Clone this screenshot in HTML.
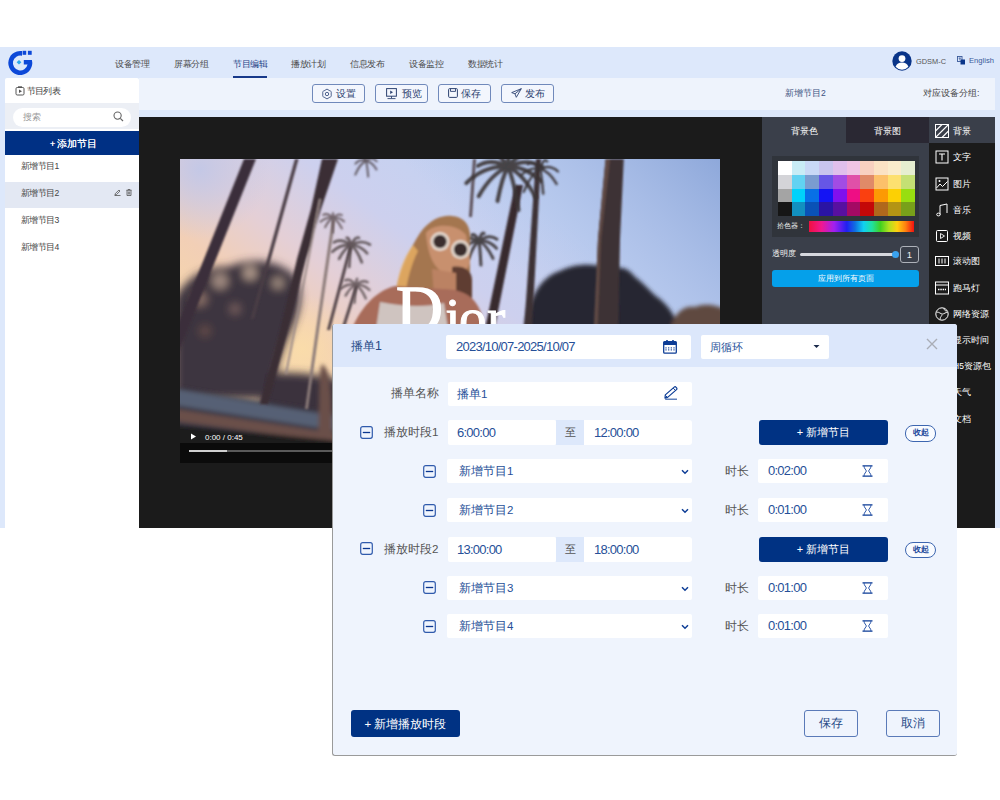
<!DOCTYPE html>
<html><head><meta charset="utf-8">
<style>
*{margin:0;padding:0;box-sizing:border-box}
html,body{width:1000px;height:800px;overflow:hidden;background:#fff;font-family:"Liberation Sans",sans-serif}
.a{position:absolute}
.app{position:absolute;left:0;top:47px;width:1000px;height:481px;background:#dde8fb}
.nav{position:absolute;top:11px;font-size:8.6px;letter-spacing:-0.5px;color:#4a4a4a;white-space:nowrap;line-height:12px}
.nav.on{color:#1e3f86}
.ul{position:absolute;top:29px;height:2px;background:#16388a}
.side{position:absolute;left:5px;top:31px;width:134px;height:450px;background:#fff;border-radius:2px 2px 0 0}
.tb{position:absolute;left:139px;top:31px;width:856px;height:32px;background:#eef3fc}
.btn{position:absolute;top:6px;width:53px;height:19px;border:1px solid #7089bb;border-radius:3px;background:#f3f6fd;font-size:10px;color:#2d4270;line-height:18px;text-align:center;white-space:nowrap}
.stage{position:absolute;left:139px;top:70px;width:623px;height:411px;background:#1b1b1b}
.rp{position:absolute;left:762px;top:70px;width:233px;height:411px;background:#1b1b1b}
.modal{position:absolute;left:332px;top:324px;width:625px;height:432px;background:#eff4fd;border-radius:3px;border-left:1px solid #9a9a9a;border-bottom:1px solid #9a9a9a}
.mh{position:absolute;left:0;top:0;width:624px;height:43px;background:#dce7fb;border-radius:3px 3px 0 0}
.inp{position:absolute;background:#fff;border-radius:2px;height:25px;font-size:11.5px;color:#264f98;line-height:25px;white-space:nowrap}
.num{font-size:13px !important;letter-spacing:-0.75px}
.lbl{position:absolute;font-size:11.6px;color:#555;line-height:14px;white-space:nowrap}
.pbtn{position:absolute;background:#003283;color:#fff;border-radius:3px;font-size:11px;text-align:center;white-space:nowrap}
</style></head><body>
<div class="app">
  <!-- header -->
  <svg class="a" style="left:0;top:0" width="40" height="32" viewBox="0 47 40 32">
    <path d="M22 51.1 A12 12 0 1 0 31.9 60 L23.8 60 L23.8 64.5 L27.55 64.5 A7.4 7.4 0 1 1 22 55.8 Z" fill="#0c48d8"/>
    <rect x="22.6" y="50.8" width="3.6" height="4" fill="#0c48d8"/><rect x="27.9" y="50.8" width="3.8" height="4" fill="#0c48d8"/>
    <path d="M19 60l2.4 2.3-2.4 2.3-2.4-2.3z" fill="#2aa8ea"/>
  </svg>
  <div class="nav" style="left:115px">设备管理</div>
  <div class="nav" style="left:174px">屏幕分组</div>
  <div class="nav on" style="left:233px">节目编辑</div>
  <div class="ul" style="left:233px;width:34px"></div>
  <div class="nav" style="left:291px">播放计划</div>
  <div class="nav" style="left:350px">信息发布</div>
  <div class="nav" style="left:409px">设备监控</div>
  <div class="nav" style="left:468px">数据统计</div>

  <svg class="a" style="left:892px;top:4px" width="20" height="20" viewBox="0 0 20 20"><circle cx="10" cy="10" r="9.7" fill="#0a3589"/><circle cx="10" cy="7.6" r="3.4" fill="#fff"/><path d="M3.6 15.8C4.6 12.6 7 11.6 10 11.6s5.4 1 6.4 4.2A8.5 8.5 0 0 1 3.6 15.8z" fill="#fff"/></svg>
  <div class="a" style="left:916px;top:10px;font-size:7.4px;color:#555;line-height:10px">GDSM-C</div>
  <svg class="a" style="left:957px;top:9px" width="8" height="9" viewBox="0 0 8 9"><rect x="0.5" y="0.5" width="4.5" height="5" fill="none" stroke="#3a5a9a" stroke-width="0.9"/><rect x="3.5" y="3.5" width="4.5" height="5" fill="#0a3589"/><path d="M1.6 2.2h2.4M2.8 1.5v3" stroke="#3a5a9a" stroke-width="0.7"/></svg>
  <div class="a" style="left:969px;top:9px;font-size:7.6px;color:#3a5a9a;line-height:10px">English</div>
  <div class="side">
    <svg class="a" style="left:10px;top:8px" width="10" height="10" viewBox="0 0 10 10"><rect x="1" y="1.5" width="8" height="7.5" rx="1.2" fill="none" stroke="#555" stroke-width="1"/><path d="M3 0.8h4" stroke="#555" stroke-width="1"/><path d="M4 3.5v3.5l3-1.75z" fill="#555"/></svg>
    <div class="a" style="left:22px;top:7px;font-size:8.6px;letter-spacing:-0.8px;color:#444;line-height:12px">节目列表</div>
    <div class="a" style="left:0;top:25px;width:134px;height:26px;background:#eceff5"></div>
    <div class="a" style="left:8px;top:30px;width:118px;height:19px;background:#fff;border-radius:10px"></div>
    <div class="a" style="left:18px;top:33px;font-size:8.7px;color:#999;line-height:12px">搜索</div>
    <svg class="a" style="left:108px;top:33px" width="11" height="11" viewBox="0 0 11 11"><circle cx="4.6" cy="4.6" r="3.6" fill="none" stroke="#666" stroke-width="1.1"/><path d="M7.3 7.3L10 10" stroke="#666" stroke-width="1.2"/></svg>
    <div class="a" style="left:0;top:53px;width:134px;height:23.5px;background:#003084;color:#fff;font-size:9.6px;letter-spacing:-0.3px;line-height:25px;text-align:center;padding-left:2px;text-shadow:0 0 0.4px #fff">+ 添加节目</div>
    <div class="a" style="left:16px;top:82px;font-size:8.6px;letter-spacing:-0.6px;color:#444;line-height:12px">新增节目1</div>
    <div class="a" style="left:0;top:104px;width:134px;height:26px;background:#e3e8f3"></div>
    <div class="a" style="left:16px;top:109px;font-size:8.6px;letter-spacing:-0.6px;color:#444;line-height:12px">新增节目2</div>
    <svg class="a" style="left:109px;top:111px" width="7" height="7" viewBox="0 0 7 7"><path d="M1 6L1.3 4.6 5 1 6 2 2.4 5.7z M0.5 6.5h6" fill="none" stroke="#555" stroke-width="0.8"/></svg>
    <svg class="a" style="left:121px;top:111px" width="6" height="7" viewBox="0 0 6 7"><path d="M0.3 1.3h5.4M2 1.2V0.5h2v0.7M1 1.5v5h4v-5M2.3 2.5v3M3.7 2.5v3" fill="none" stroke="#555" stroke-width="0.8"/></svg>
    <div class="a" style="left:16px;top:136px;font-size:8.6px;letter-spacing:-0.6px;color:#444;line-height:12px">新增节目3</div>
    <div class="a" style="left:16px;top:163px;font-size:8.6px;letter-spacing:-0.6px;color:#444;line-height:12px">新增节目4</div>
  </div>
  <div class="tb">
    <div class="btn" style="left:173px"><svg class="a" style="left:8px;top:3px" width="12" height="12" viewBox="0 0 12 12"><path d="M5.00 1.62 Q6.00 0.70 7.00 1.62 Q8.00 2.54 9.29 2.94 Q10.59 3.35 10.29 4.67 Q10.00 6.00 10.29 7.32 Q10.59 8.65 9.29 9.06 Q8.00 9.46 7.00 10.38 Q6.00 11.30 5.00 10.38 Q4.00 9.46 2.71 9.06 Q1.41 8.65 1.71 7.33 Q2.00 6.00 1.71 4.68 Q1.41 3.35 2.71 2.94 Q4.00 2.54 5.00 1.62Z" fill="none" stroke="#3d5282" stroke-width="0.9"/><circle cx="6" cy="6" r="1.7" fill="none" stroke="#3d5282" stroke-width="0.9"/></svg><span class="a" style="left:23px;top:0">设置</span></div>
    <div class="btn" style="left:236px"><svg class="a" style="left:10px;top:3px" width="11" height="12" viewBox="0 0 11 12"><rect x="0.6" y="0.6" width="9.8" height="7.6" fill="none" stroke="#2d4270" stroke-width="1"/><path d="M4.2 2.6v3.5l2.8-1.75z" fill="#2d4270"/><path d="M5.5 8.2v2M1.5 10.6h8" stroke="#2d4270" stroke-width="0.9"/></svg><span class="a" style="left:26px;top:0">预览</span></div>
    <div class="btn" style="left:299px"><svg class="a" style="left:9px;top:3px" width="10" height="10" viewBox="0 0 10 10"><rect x="0.6" y="0.6" width="8.8" height="8.8" rx="1" fill="none" stroke="#2d4270" stroke-width="1"/><path d="M2.5 0.8v2.6h5V0.8" fill="none" stroke="#2d4270" stroke-width="0.9"/></svg><span class="a" style="left:22px;top:0">保存</span></div>
    <div class="btn" style="left:362px"><svg class="a" style="left:9px;top:3px" width="11" height="10" viewBox="0 0 11 10"><path d="M10.3 0.7L0.7 4.6 4 5.8 5.3 9.3zM10.3 0.7L4 5.8" fill="none" stroke="#2d4270" stroke-width="0.9" stroke-linejoin="round"/></svg><span class="a" style="left:23px;top:0">发布</span></div>
    <div class="a" style="left:646px;top:9px;font-size:8.6px;color:#3c5282;line-height:12px">新增节目2</div>
    <div class="a" style="left:784px;top:9px;font-size:8.6px;color:#444;line-height:12px">对应设备分组:</div>
  </div>
  <div class="stage">
    <svg class="a" style="left:41px;top:42px" width="540" height="304" viewBox="0 0 540 304">
      <defs>
        <linearGradient id="sky" gradientUnits="userSpaceOnUse" x1="300" y1="0" x2="120" y2="240">
          <stop offset="0" stop-color="#c2d2f2"/>
          <stop offset="0.35" stop-color="#cdd0ee"/>
          <stop offset="0.6" stop-color="#e4cfd6"/>
          <stop offset="0.8" stop-color="#f2cfb6"/>
          <stop offset="1" stop-color="#f6d6aa"/>
        </linearGradient>
        <linearGradient id="skyR" gradientUnits="userSpaceOnUse" x1="540" y1="0" x2="380" y2="160">
          <stop offset="0" stop-color="#8ea8da"/>
          <stop offset="1" stop-color="#a8bce8" stop-opacity="0"/>
        </linearGradient>
        <radialGradient id="tl" gradientUnits="userSpaceOnUse" cx="20" cy="10" r="70">
          <stop offset="0" stop-color="#c4c8e6" stop-opacity="1"/>
          <stop offset="1" stop-color="#c4c8e6" stop-opacity="0"/>
        </radialGradient>
        <radialGradient id="glow" gradientUnits="userSpaceOnUse" cx="122" cy="190" r="55">
          <stop offset="0" stop-color="#fadcaa" stop-opacity="1"/>
          <stop offset="1" stop-color="#fadcaa" stop-opacity="0"/>
        </radialGradient>
        <filter id="b2" x="-20%" y="-20%" width="140%" height="140%"><feGaussianBlur stdDeviation="2"/></filter>
        <filter id="b4" x="-30%" y="-30%" width="160%" height="160%"><feGaussianBlur stdDeviation="4"/></filter>
        <filter id="b1" x="-10%" y="-10%" width="120%" height="120%"><feGaussianBlur stdDeviation="0.9"/></filter>
      </defs>
      <rect width="540" height="304" fill="url(#sky)"/>
      <rect width="540" height="304" fill="url(#skyR)"/>
      <rect width="200" height="120" fill="url(#tl)"/>
      <ellipse cx="122" cy="190" rx="60" ry="60" fill="url(#glow)"/>
      <!-- lower-left foliage -->
      <g filter="url(#b4)">
        <path d="M-5 140 C5 120 25 106 48 108 C68 98 98 100 114 116 C124 130 122 150 112 170 C102 190 95 215 90 240 L-5 240Z" fill="#3e3440"/>
        <path d="M85 215 C110 212 140 215 160 222 L160 260 L80 260Z" fill="#3a303c"/>
        <circle cx="20" cy="140" r="7" fill="#8a7068"/>
        <circle cx="40" cy="122" r="8" fill="#a08a80"/>
        <circle cx="70" cy="114" r="7" fill="#b09a8c"/>
        <circle cx="98" cy="124" r="6" fill="#a08c80"/>
        <circle cx="55" cy="150" r="5" fill="#7a6260"/>
        <circle cx="25" cy="172" r="5" fill="#6a5048"/>
      </g>
      <!-- road -->
      <g filter="url(#b2)">
        <path d="M-5 228 L160 255 L160 290 L-5 290Z" fill="#3a3844"/>
        <path d="M-5 230 L160 258 L160 272 L-5 246Z" fill="#566074"/>
        <path d="M-5 250 L160 275 L160 284 L-5 262Z" fill="#6a5048"/>
        <path d="M-5 266 L160 282 L160 290 L-5 290Z" fill="#1e1a1c"/>
        <path d="M142 205 C150 210 152 230 152 280 L138 280 C140 240 138 215 142 205Z" fill="#6a5048"/>
      </g>
      <!-- trunks left -->
      <g filter="url(#b1)">
        <path d="M64 0 L76 0 L-10 215 L-22 215Z" fill="#3b2f3a"/>
        <path d="M115 0 L118.5 0 L74 160 L70.5 160Z" fill="#4a3c44"/>
        <path d="M142 0 L158 0 L141 50 L126 100 L108 171 L88 245 L80 245 L100 171 L117 100 L131 50Z" fill="#3a2d35"/>
        <path d="M139 40 L141 40 L107 215 L105 215Z" fill="#9a8a88"/>
        <path d="M152 61 L155 61 L139 171 L136 171Z" fill="#8a7a78"/>
        <path d="M169 88 L172 88 L150 171 L147 171Z" fill="#4e4044"/>
        <path d="M175 127 L178 127 L164 171 L161 171Z" fill="#4e4044"/>
        <path d="M136 171 L139 171 L128 250 L125 250Z" fill="#8a7a78"/>
      </g>
      <g filter="url(#b1)"><g fill="none" stroke="#5a4c4e" stroke-width="2" stroke-linecap="round" opacity="0.8"><path d="M153.0 59.0Q159.2 57.9 164.2 62.4"/><path d="M153.0 59.0Q157.9 61.4 161.9 69.5"/><path d="M153.0 59.0Q153.0 63.4 153.0 73.7"/><path d="M153.0 59.0Q148.6 61.1 145.1 68.3"/><path d="M153.0 59.0Q146.1 57.7 140.4 62.8"/><path d="M153.0 59.0Q147.6 53.5 143.1 55.8"/><path d="M153.0 59.0Q153.0 53.3 153.0 54.0"/><path d="M153.0 59.0Q157.9 54.1 161.9 56.1"/></g><g fill="none" stroke="#4e4244" stroke-width="2.6" stroke-linecap="round" opacity="0.85"><path d="M171.0 86.0Q179.9 86.1 187.2 94.3"/><path d="M171.0 86.0Q177.0 90.5 181.8 103.3"/><path d="M171.0 86.0Q170.0 92.5 169.2 108.0"/><path d="M171.0 86.0Q164.5 89.2 159.1 99.9"/><path d="M171.0 86.0Q160.6 84.8 152.2 92.9"/><path d="M171.0 86.0Q161.5 78.9 153.8 83.3"/><path d="M171.0 86.0Q168.6 77.6 166.7 78.9"/><path d="M171.0 86.0Q175.4 77.0 179.0 78.8"/><path d="M171.0 86.0Q181.5 80.2 190.0 85.6"/></g><g fill="none" stroke="#54484a" stroke-width="2.4" stroke-linecap="round" opacity="0.8"><path d="M176.0 126.0Q183.5 125.1 189.5 131.0"/><path d="M176.0 126.0Q181.4 129.3 185.8 139.4"/><path d="M176.0 126.0Q175.2 131.3 174.5 143.8"/><path d="M176.0 126.0Q170.3 128.2 165.6 136.6"/><path d="M176.0 126.0Q167.6 123.9 160.8 129.6"/><path d="M176.0 126.0Q170.0 118.9 165.1 121.3"/><path d="M176.0 126.0Q176.7 119.1 177.2 119.9"/><path d="M176.0 126.0Q182.4 120.4 187.7 123.2"/></g><g fill="none" stroke="#4a4044" stroke-width="2" stroke-linecap="round" opacity="0.8"><path d="M186.0 2.0Q191.8 2.5 196.5 10.5"/><path d="M186.0 2.0Q187.2 5.9 188.2 17.6"/><path d="M186.0 2.0Q180.1 4.3 175.3 15.7"/><path d="M186.0 2.0Q180.2 -0.7 175.5 4.7"/><path d="M186.0 2.0Q184.8 -4.4 183.8 -1.0"/><path d="M186.0 2.0Q191.9 -3.1 196.7 2.3"/></g></g>
      <!-- right trees -->
      <g filter="url(#b2)">
        <path d="M345 170 C348 140 360 118 380 112 C395 104 415 104 430 110 C445 106 450 112 455 118 C465 125 472 135 480 140 C486 146 492 150 500 170Z" fill="#282630"/>
        <path d="M490 170 C495 152 505 146 515 148 C525 144 535 146 545 150 L545 170Z" fill="#5e4a40"/>
      </g>
      <g filter="url(#b1)">
        <path d="M293 0 L296 0 L292 58 L289 58Z" fill="#5a4d55"/>
        <path d="M335 26 L343 26 L314.5 170 L305 170Z" fill="#38292e"/>
        <path d="M356 0 L361 0 L352 170 L344 170Z" fill="#3c3036"/>
        <path d="M425.6 0 L443.8 0 L440 80 L438.4 170 L413.8 170 L418 80Z" fill="#3e3236"/>
        <path d="M425.6 0 L430 0 L421 80 L417.5 170 L413.8 170 L418 80Z" fill="#5e4a44"/>
      </g>
      <g filter="url(#b1)"><g fill="none" stroke="#3a3436" stroke-width="4" stroke-linecap="round" opacity="0.9"><path d="M328.0 8.0Q346.2 7.0 361.1 22.5"/><path d="M328.0 8.0Q343.3 14.8 355.8 38.6"/><path d="M328.0 8.0Q333.8 20.6 338.5 51.1"/><path d="M328.0 8.0Q322.2 17.8 317.5 42.0"/><path d="M328.0 8.0Q311.9 14.1 298.7 37.2"/><path d="M328.0 8.0Q305.0 5.7 286.3 24.1"/><path d="M328.0 8.0Q311.4 -1.5 297.9 6.9"/><path d="M328.0 8.0Q317.3 -9.2 308.6 -5.0"/><path d="M328.0 8.0Q328.7 -13.5 329.3 -10.9"/><path d="M328.0 8.0Q338.5 -6.8 347.1 -2.7"/><path d="M328.0 8.0Q347.2 -1.8 362.9 8.4"/></g><g fill="none" stroke="#3a3436" stroke-width="2.5" stroke-linecap="round" opacity="0.9"><path d="M360.0 10.0Q369.1 12.0 376.6 24.9"/><path d="M360.0 10.0Q361.8 16.7 363.2 34.7"/><path d="M360.0 10.0Q351.0 14.9 343.7 32.8"/><path d="M360.0 10.0Q349.5 7.5 340.9 16.6"/><path d="M360.0 10.0Q353.3 0.5 347.8 5.3"/><path d="M360.0 10.0Q363.9 -1.9 367.1 2.4"/><path d="M360.0 10.0Q369.8 5.2 377.9 12.4"/></g><g fill="none" stroke="#3a3436" stroke-width="3" stroke-linecap="round" opacity="0.9"><path d="M299.0 82.0Q308.6 80.9 316.5 89.3"/><path d="M299.0 82.0Q306.7 85.8 313.0 99.4"/><path d="M299.0 82.0Q300.1 88.8 300.9 106.1"/><path d="M299.0 82.0Q293.4 86.2 288.9 99.0"/><path d="M299.0 82.0Q288.5 82.1 279.9 92.8"/><path d="M299.0 82.0Q288.0 76.0 279.1 82.7"/><path d="M299.0 82.0Q294.9 73.7 291.6 76.2"/><path d="M299.0 82.0Q301.8 72.1 304.1 74.6"/><path d="M299.0 82.0Q308.9 74.6 317.0 80.2"/></g></g>
      <!-- woman -->
      <g filter="url(#b1)">
        <path d="M214 152 C212 128 228 92 240 74 C250 60 262 56 272 57 C284 58 292 66 290 84 L290 150 L270 160Z" fill="#a47650"/>
        <path d="M246 74 C254 64 276 64 286 76 L290 104 C286 114 278 118 268 116 C256 112 248 100 246 74Z" fill="#c8906e"/>
        <path d="M272 108 C282 106 291 110 292 120 L292 152 L272 152Z" fill="#5e3e32"/>
        <path d="M252 110 L276 114 L276 150 L255 150Z" fill="#bb8264"/>
        <path d="M216 134 C218 114 224 98 233 86 L238 92 C231 106 227 122 225 138Z" fill="#e6ae62" opacity="0.85"/>
        <path d="M172 170 C180 150 195 132 215 127 L262 130 C286 130 302 140 304 170Z" fill="#a86c5a"/>
        <path d="M196 170 L200 143 C226 148 246 148 264 144 L268 170Z" fill="#cfc4c0"/>
        <circle cx="260" cy="82.5" r="9.5" fill="#e6dad0"/>
        <circle cx="280.5" cy="90.6" r="9.5" fill="#e6dad0"/>
        <circle cx="260" cy="82.5" r="6.8" fill="#3a2e2e"/>
        <circle cx="280.5" cy="90.6" r="6.8" fill="#3a2e2e"/>
      </g>
      <text x="216" y="172" font-family="Liberation Serif" font-size="65" fill="#ffffff" stroke="#ffffff" stroke-width="1.4">D</text>
      <text x="273" y="177" font-family="Liberation Serif" font-size="55" text-anchor="middle" fill="#ffffff" stroke="#ffffff" stroke-width="1">i</text>
      <text x="279" y="177" font-family="Liberation Serif" font-size="55" fill="#ffffff" stroke="#ffffff" stroke-width="1">o</text>
      <text x="307" y="177" font-family="Liberation Serif" font-size="55" fill="#ffffff" stroke="#ffffff" stroke-width="1">r</text>
      <!-- control bar -->
      <rect x="0" y="284" width="540" height="20" fill="#0b0b0b"/>
      <rect x="9" y="291" width="520" height="2" fill="#5a5a5a"/>
      <rect x="9" y="291" width="38" height="2" fill="#cfcfcf"/>
      <path d="M11 274.5v6l5-3z" fill="#fff"/>
      <text x="25" y="281" font-family="Liberation Sans" font-size="8" fill="#fff">0:00 / 0:45</text>
    </svg>
  </div>
  <div class="rp">
    <div class="a" style="left:0;top:0;width:167px;height:411px;background:#3a3f4a"></div>
    <div class="a" style="left:0;top:0;width:84px;height:26px;color:#fff;font-size:8.6px;line-height:28px;text-align:center">背景色</div>
    <div class="a" style="left:84px;top:0;width:83px;height:26px;background:#2a2833;color:#fff;font-size:8.6px;line-height:28px;text-align:center">背景图</div>
    <div class="a" style="left:10px;top:39px;width:147px;height:81px;background:#30343b"></div>
    <svg class="a" style="left:16px;top:44px" width="137" height="55" viewBox="0 0 10 4" preserveAspectRatio="none" shape-rendering="crispEdges">
      <rect x="0" y="0" width="1" height="1" fill="#ffffff"/><rect x="1" y="0" width="1" height="1" fill="#c8ecf6"/><rect x="2" y="0" width="1" height="1" fill="#c8d8f6"/><rect x="3" y="0" width="1" height="1" fill="#c8c4ee"/><rect x="4" y="0" width="1" height="1" fill="#e0c0ec"/><rect x="5" y="0" width="1" height="1" fill="#f0c4e4"/><rect x="6" y="0" width="1" height="1" fill="#f8d0c0"/><rect x="7" y="0" width="1" height="1" fill="#fbe2c4"/><rect x="8" y="0" width="1" height="1" fill="#faeccc"/><rect x="9" y="0" width="1" height="1" fill="#e6eed0"/>
      <rect x="0" y="1" width="1" height="1" fill="#d4d4d8"/><rect x="1" y="1" width="1" height="1" fill="#62d2f2"/><rect x="2" y="1" width="1" height="1" fill="#7a9cd0"/><rect x="3" y="1" width="1" height="1" fill="#6656e6"/><rect x="4" y="1" width="1" height="1" fill="#a24ce4"/><rect x="5" y="1" width="1" height="1" fill="#e050a8"/><rect x="6" y="1" width="1" height="1" fill="#e08a68"/><rect x="7" y="1" width="1" height="1" fill="#fcc06a"/><rect x="8" y="1" width="1" height="1" fill="#fde070"/><rect x="9" y="1" width="1" height="1" fill="#c4e074"/>
      <rect x="0" y="2" width="1" height="1" fill="#a4a4a4"/><rect x="1" y="2" width="1" height="1" fill="#00d2fa"/><rect x="2" y="2" width="1" height="1" fill="#0870e6"/><rect x="3" y="2" width="1" height="1" fill="#1414f4"/><rect x="4" y="2" width="1" height="1" fill="#8010ee"/><rect x="5" y="2" width="1" height="1" fill="#ee0e84"/><rect x="6" y="2" width="1" height="1" fill="#fa4010"/><rect x="7" y="2" width="1" height="1" fill="#fc9a04"/><rect x="8" y="2" width="1" height="1" fill="#fcd004"/><rect x="9" y="2" width="1" height="1" fill="#98de10"/>
      <rect x="0" y="3" width="1" height="1" fill="#161616"/><rect x="1" y="3" width="1" height="1" fill="#1290c0"/><rect x="2" y="3" width="1" height="1" fill="#0a52b6"/><rect x="3" y="3" width="1" height="1" fill="#2a14a4"/><rect x="4" y="3" width="1" height="1" fill="#5810a0"/><rect x="5" y="3" width="1" height="1" fill="#a40a64"/><rect x="6" y="3" width="1" height="1" fill="#c40808"/><rect x="7" y="3" width="1" height="1" fill="#b0681c"/><rect x="8" y="3" width="1" height="1" fill="#b49414"/><rect x="9" y="3" width="1" height="1" fill="#78a01a"/>
    </svg>
    <div class="a" style="left:15px;top:104px;font-size:7.4px;color:#eee;line-height:10px">拾色器：</div>
    <div class="a" style="left:47px;top:104px;width:105px;height:11px;background:linear-gradient(90deg,#f01040 0%,#f01890 12%,#a020f0 24%,#2020f0 36%,#1070e0 44%,#10d0f0 52%,#20e0a0 60%,#40d020 68%,#b0e020 76%,#ffd010 84%,#ff8010 92%,#f01010 100%)"></div>
    <div class="a" style="left:10px;top:131px;font-size:8px;color:#eee;line-height:12px">透明度</div>
    <div class="a" style="left:38px;top:136px;width:96px;height:3px;background:#d6d8de;border-radius:2px"></div>
    <div class="a" style="left:130px;top:134px;width:7px;height:7px;background:#3aa2ee;border-radius:50%"></div>
    <div class="a" style="left:138px;top:129px;width:19px;height:17px;border:1px solid #aeb2ba;border-radius:3px;color:#eee;font-size:9.5px;line-height:15px;text-align:center">1</div>
    <div class="a" style="left:10px;top:153px;width:147px;height:17px;background:#05a0ea;border-radius:3px;color:#fff;font-size:8.4px;line-height:17px;text-align:center">应用到所有页面</div>
    <div class="a" style="left:167px;top:0;width:66px;height:26px;background:#3a3f4a"></div>
    <svg class="a" style="left:173px;top:6.6px" width="14" height="14" viewBox="0 0 14 14"><rect x="0.5" y="0.5" width="13" height="13" fill="none" stroke="#fff" stroke-width="1"/><path d="M0.5 7L7 0.5M0.5 13.5L13.5 0.5M7 13.5L13.5 7" stroke="#fff" stroke-width="1.1"/></svg>
    <div class="a" style="left:191px;top:7.6px;font-size:8.5px;color:#fff;line-height:12px;white-space:nowrap">背景</div>
    <svg class="a" style="left:173px;top:33.3px" width="14" height="14" viewBox="0 0 14 14"><rect x="1" y="1" width="12" height="12" fill="none" stroke="#fff" stroke-width="1"/><path d="M4 4h6M7 4v6.5" stroke="#fff" stroke-width="1.1"/></svg>
    <div class="a" style="left:191px;top:34.3px;font-size:8.5px;color:#fff;line-height:12px;white-space:nowrap">文字</div>
    <svg class="a" style="left:173px;top:59.8px" width="14" height="14" viewBox="0 0 14 14"><rect x="1" y="1" width="12" height="12" fill="none" stroke="#fff" stroke-width="1"/><path d="M1.5 11L5 7l2.5 2.5 5-5" fill="none" stroke="#fff" stroke-width="1"/><circle cx="4.5" cy="4" r="1" fill="#fff"/></svg>
    <div class="a" style="left:191px;top:60.8px;font-size:8.5px;color:#fff;line-height:12px;white-space:nowrap">图片</div>
    <svg class="a" style="left:173px;top:85.6px" width="14" height="14" viewBox="0 0 14 14"><path d="M5 11.5V2.5l7-1.5v9" fill="none" stroke="#fff" stroke-width="1"/><ellipse cx="3.5" cy="11.5" rx="1.8" ry="1.4" fill="none" stroke="#fff" stroke-width="1"/></svg>
    <div class="a" style="left:191px;top:86.6px;font-size:8.5px;color:#fff;line-height:12px;white-space:nowrap">音乐</div>
    <svg class="a" style="left:173px;top:112.0px" width="14" height="14" viewBox="0 0 14 14"><rect x="1.5" y="1.5" width="11" height="11" rx="1" fill="none" stroke="#fff" stroke-width="1"/><path d="M5.5 4.5v5l4-2.5z" fill="none" stroke="#fff" stroke-width="0.9"/></svg>
    <div class="a" style="left:191px;top:113.0px;font-size:8.5px;color:#fff;line-height:12px;white-space:nowrap">视频</div>
    <svg class="a" style="left:173px;top:137.3px" width="14" height="14" viewBox="0 0 14 14"><rect x="0.5" y="2.5" width="13" height="9" fill="none" stroke="#fff" stroke-width="1"/><path d="M4 4.5v5M7 4.5v5M10 4.5v5" stroke="#fff" stroke-width="1"/></svg>
    <div class="a" style="left:191px;top:138.3px;font-size:8.5px;color:#fff;line-height:12px;white-space:nowrap">滚动图</div>
    <svg class="a" style="left:173px;top:164.3px" width="14" height="14" viewBox="0 0 14 14"><rect x="0.5" y="1" width="13" height="12" fill="none" stroke="#fff" stroke-width="1"/><path d="M0.5 4h13" stroke="#fff" stroke-width="1"/><path d="M3 8.5h8" stroke="#fff" stroke-width="1.5" stroke-dasharray="1.5 0.8"/></svg>
    <div class="a" style="left:191px;top:165.3px;font-size:8.5px;color:#fff;line-height:12px;white-space:nowrap">跑马灯</div>
    <svg class="a" style="left:173px;top:190.4px" width="14" height="14" viewBox="0 0 14 14"><circle cx="7" cy="7" r="6.2" fill="none" stroke="#fff" stroke-width="1"/><path d="M1.5 5c3 0 4 2 6 2s3-2 5-1.5M5 12.5c0-3 2-3 2-5M9 1c0 2 1 3 3 3" fill="none" stroke="#fff" stroke-width="0.9"/></svg>
    <div class="a" style="left:191px;top:191.4px;font-size:8.5px;color:#fff;line-height:12px;white-space:nowrap">网络资源</div>
    <svg class="a" style="left:173px;top:216.0px" width="14" height="14" viewBox="0 0 14 14"><circle cx="7" cy="7" r="6" fill="none" stroke="#fff" stroke-width="1"/><path d="M7 3.5V7l2.5 1.5" fill="none" stroke="#fff" stroke-width="1"/></svg>
    <div class="a" style="left:191px;top:217.0px;font-size:8.5px;color:#fff;line-height:12px;white-space:nowrap">显示时间</div>
    <svg class="a" style="left:173px;top:242.0px" width="14" height="14" viewBox="0 0 14 14"><rect x="1" y="1" width="12" height="12" fill="none" stroke="#fff" stroke-width="1"/></svg>
    <div class="a" style="left:191px;top:243.0px;font-size:8.5px;color:#fff;line-height:12px;white-space:nowrap">H5资源包</div>
    <svg class="a" style="left:173px;top:267.6px" width="14" height="14" viewBox="0 0 14 14"><path d="M3.5 10.5a3 3 0 0 1 0.5-6 4 4 0 0 1 7 1.5 2.3 2.3 0 0 1 -0.5 4.5z" fill="none" stroke="#fff" stroke-width="1"/></svg>
    <div class="a" style="left:191px;top:268.6px;font-size:8.5px;color:#fff;line-height:12px;white-space:nowrap">天气</div>
    <svg class="a" style="left:173px;top:294.6px" width="14" height="14" viewBox="0 0 14 14"><path d="M2 0.5h7l3 3v10H2z" fill="none" stroke="#fff" stroke-width="1"/></svg>
    <div class="a" style="left:191px;top:295.6px;font-size:8.5px;color:#fff;line-height:12px;white-space:nowrap">文档</div>

  </div>
</div>
<div class="modal">
  <div class="mh"></div>
  <div class="a" style="left:18px;top:15px;font-size:12.4px;color:#274a86;line-height:15px">播单1</div>
  <div class="inp num" style="left:113px;top:11px;width:245px;height:24px;line-height:24px;padding-left:10px">2023/10/07-2025/10/07</div>
  <svg class="a" style="left:330px;top:16px" width="14" height="14" viewBox="0 0 14 14"><rect x="0.7" y="1.6" width="12.6" height="11.6" rx="1" fill="none" stroke="#0d3d96" stroke-width="1.3"/><rect x="0.7" y="1.6" width="12.6" height="3.4" fill="#0d3d96"/><rect x="3.2" y="0" width="1.6" height="3" fill="#0d3d96"/><rect x="9.2" y="0" width="1.6" height="3" fill="#0d3d96"/><path d="M3 7.2v4M5.7 7.2v4M8.3 7.2v4M11 7.2v4" stroke="#0d3d96" stroke-width="1.1" stroke-dasharray="1.2 0.8"/></svg>
  <div class="inp" style="left:368px;top:11px;width:128px;height:24px;line-height:24px;padding-left:9px;font-size:10.6px">周循环</div>
  <svg class="a" style="left:480px;top:20px" width="7" height="5" viewBox="0 0 7 5"><path d="M0.5 1h6L3.5 4z" fill="#1a2a4a"/></svg>
  <svg class="a" style="left:593px;top:14px" width="12" height="12" viewBox="0 0 12 12"><path d="M1 1l10 10M11 1L1 11" stroke="#a9adb6" stroke-width="1.4"/></svg>
  <div class="lbl" style="left:58px;top:62px">播单名称</div>
  <div class="inp" style="left:115px;top:58px;width:244px;height:24px;line-height:24px;padding-left:9px">播单1</div>
  <svg class="a" style="left:331px;top:62px" width="14" height="14" viewBox="0 0 14 14"><path d="M1.3 8.9L10.2 1.1Q11.2 0.3 12.1 1.3L12.6 1.9Q13.3 2.9 12.5 3.6L3.6 11.4L1 12.1Z" fill="none" stroke="#0d3d96" stroke-width="1.2" stroke-linejoin="round"/><path d="M9.2 2.1L11.6 4.6M1.6 9.6L3 11" stroke="#0d3d96" stroke-width="1"/><path d="M1.2 13.2h11.8" stroke="#3a62aa" stroke-width="1.2"/></svg>
<svg class="a" style="left:27px;top:101.5px" width="13" height="13" viewBox="0 0 13 13"><rect x="0.7" y="0.7" width="11.6" height="11.6" rx="2" fill="none" stroke="#2f5aac" stroke-width="1.2"/><path d="M2.8 6.5h7.4" stroke="#0a3690" stroke-width="1.3"/></svg>
  <div class="lbl" style="left:51px;top:101px">播放时段1</div>
  <div class="inp num" style="left:115px;top:96px;width:108px;padding-left:9px">6:00:00</div>
  <div class="a" style="left:223px;top:96px;width:28px;height:25px;background:#dde8fb;color:#555;font-size:11px;line-height:25px;text-align:center">至</div>
  <div class="inp num" style="left:251px;top:96px;width:108px;border-radius:0 3px 3px 0;padding-left:10px">12:00:00</div>
  <div class="pbtn" style="left:426px;top:96px;width:129px;height:25px;line-height:25px">+ 新增节目</div>
  <div class="a" style="left:572px;top:101px;width:31px;height:16.5px;border:1.4px solid #3d66b0;border-radius:8px;background:#f9fbff;color:#1f4a9c;font-size:8.4px;font-weight:bold;line-height:13.5px;text-align:center">收起</div>
<svg class="a" style="left:90px;top:140.5px" width="13" height="13" viewBox="0 0 13 13"><rect x="0.7" y="0.7" width="11.6" height="11.6" rx="2" fill="none" stroke="#2f5aac" stroke-width="1.2"/><path d="M2.8 6.5h7.4" stroke="#0a3690" stroke-width="1.3"/></svg>
  <div class="inp" style="left:114px;top:135px;width:245px;height:24px;line-height:24px;padding-left:12px">新增节目1</div>
<svg class="a" style="left:348px;top:145px" width="8" height="6" viewBox="0 0 8 6"><path d="M1 1.2l3 3 3-3" fill="none" stroke="#0d3d96" stroke-width="1.5"/></svg>
  <div class="lbl" style="left:392px;top:140px">时长</div>
  <div class="inp num" style="left:425px;top:135px;width:130px;height:24px;line-height:24px;padding-left:10px">0:02:00</div>
<svg class="a" style="left:529px;top:141px" width="11" height="12" viewBox="0 0 11 12"><path d="M0.5 0.8h10M0.5 11.2h10" stroke="#0d3d96" stroke-width="1.2"/><path d="M2 0.8C2 3.8 4.3 4.8 4.3 6S2 8.2 2 11.2M9 0.8C9 3.8 6.7 4.8 6.7 6S9 8.2 9 11.2" fill="none" stroke="#2a55a8" stroke-width="1"/></svg>
<svg class="a" style="left:90px;top:179.5px" width="13" height="13" viewBox="0 0 13 13"><rect x="0.7" y="0.7" width="11.6" height="11.6" rx="2" fill="none" stroke="#2f5aac" stroke-width="1.2"/><path d="M2.8 6.5h7.4" stroke="#0a3690" stroke-width="1.3"/></svg>
  <div class="inp" style="left:114px;top:174px;width:245px;height:24px;line-height:24px;padding-left:12px">新增节目2</div>
<svg class="a" style="left:348px;top:184px" width="8" height="6" viewBox="0 0 8 6"><path d="M1 1.2l3 3 3-3" fill="none" stroke="#0d3d96" stroke-width="1.5"/></svg>
  <div class="lbl" style="left:392px;top:179px">时长</div>
  <div class="inp num" style="left:425px;top:174px;width:130px;height:24px;line-height:24px;padding-left:10px">0:01:00</div>
<svg class="a" style="left:529px;top:180px" width="11" height="12" viewBox="0 0 11 12"><path d="M0.5 0.8h10M0.5 11.2h10" stroke="#0d3d96" stroke-width="1.2"/><path d="M2 0.8C2 3.8 4.3 4.8 4.3 6S2 8.2 2 11.2M9 0.8C9 3.8 6.7 4.8 6.7 6S9 8.2 9 11.2" fill="none" stroke="#2a55a8" stroke-width="1"/></svg>
<svg class="a" style="left:27px;top:218.0px" width="13" height="13" viewBox="0 0 13 13"><rect x="0.7" y="0.7" width="11.6" height="11.6" rx="2" fill="none" stroke="#2f5aac" stroke-width="1.2"/><path d="M2.8 6.5h7.4" stroke="#0a3690" stroke-width="1.3"/></svg>
  <div class="lbl" style="left:51px;top:217.5px">播放时段2</div>
  <div class="inp num" style="left:115px;top:212.5px;width:108px;padding-left:9px">13:00:00</div>
  <div class="a" style="left:223px;top:212.5px;width:28px;height:25px;background:#dde8fb;color:#555;font-size:11px;line-height:25px;text-align:center">至</div>
  <div class="inp num" style="left:251px;top:212.5px;width:108px;border-radius:0 3px 3px 0;padding-left:10px">18:00:00</div>
  <div class="pbtn" style="left:426px;top:212.5px;width:129px;height:25px;line-height:25px">+ 新增节目</div>
  <div class="a" style="left:572px;top:217.5px;width:31px;height:16.5px;border:1.4px solid #3d66b0;border-radius:8px;background:#f9fbff;color:#1f4a9c;font-size:8.4px;font-weight:bold;line-height:13.5px;text-align:center">收起</div>
<svg class="a" style="left:90px;top:257.0px" width="13" height="13" viewBox="0 0 13 13"><rect x="0.7" y="0.7" width="11.6" height="11.6" rx="2" fill="none" stroke="#2f5aac" stroke-width="1.2"/><path d="M2.8 6.5h7.4" stroke="#0a3690" stroke-width="1.3"/></svg>
  <div class="inp" style="left:114px;top:251.5px;width:245px;height:24px;line-height:24px;padding-left:12px">新增节目3</div>
<svg class="a" style="left:348px;top:261.5px" width="8" height="6" viewBox="0 0 8 6"><path d="M1 1.2l3 3 3-3" fill="none" stroke="#0d3d96" stroke-width="1.5"/></svg>
  <div class="lbl" style="left:392px;top:256.5px">时长</div>
  <div class="inp num" style="left:425px;top:251.5px;width:130px;height:24px;line-height:24px;padding-left:10px">0:01:00</div>
<svg class="a" style="left:529px;top:257.5px" width="11" height="12" viewBox="0 0 11 12"><path d="M0.5 0.8h10M0.5 11.2h10" stroke="#0d3d96" stroke-width="1.2"/><path d="M2 0.8C2 3.8 4.3 4.8 4.3 6S2 8.2 2 11.2M9 0.8C9 3.8 6.7 4.8 6.7 6S9 8.2 9 11.2" fill="none" stroke="#2a55a8" stroke-width="1"/></svg>
<svg class="a" style="left:90px;top:295.5px" width="13" height="13" viewBox="0 0 13 13"><rect x="0.7" y="0.7" width="11.6" height="11.6" rx="2" fill="none" stroke="#2f5aac" stroke-width="1.2"/><path d="M2.8 6.5h7.4" stroke="#0a3690" stroke-width="1.3"/></svg>
  <div class="inp" style="left:114px;top:290px;width:245px;height:24px;line-height:24px;padding-left:12px">新增节目4</div>
<svg class="a" style="left:348px;top:300px" width="8" height="6" viewBox="0 0 8 6"><path d="M1 1.2l3 3 3-3" fill="none" stroke="#0d3d96" stroke-width="1.5"/></svg>
  <div class="lbl" style="left:392px;top:295px">时长</div>
  <div class="inp num" style="left:425px;top:290px;width:130px;height:24px;line-height:24px;padding-left:10px">0:01:00</div>
<svg class="a" style="left:529px;top:296px" width="11" height="12" viewBox="0 0 11 12"><path d="M0.5 0.8h10M0.5 11.2h10" stroke="#0d3d96" stroke-width="1.2"/><path d="M2 0.8C2 3.8 4.3 4.8 4.3 6S2 8.2 2 11.2M9 0.8C9 3.8 6.7 4.8 6.7 6S9 8.2 9 11.2" fill="none" stroke="#2a55a8" stroke-width="1"/></svg>
  <div class="pbtn" style="left:18px;top:386px;width:109px;height:27px;line-height:27px;font-size:11.6px">+ 新增播放时段</div>
  <div class="a" style="left:471px;top:386px;width:54px;height:27px;border:1.5px solid #5a7ab8;border-radius:3px;color:#274a86;font-size:11.6px;line-height:24px;text-align:center">保存</div>
  <div class="a" style="left:553px;top:386px;width:54px;height:27px;border:1.5px solid #5a7ab8;border-radius:3px;color:#274a86;font-size:11.6px;line-height:24px;text-align:center">取消</div>
</div>
</body></html>
